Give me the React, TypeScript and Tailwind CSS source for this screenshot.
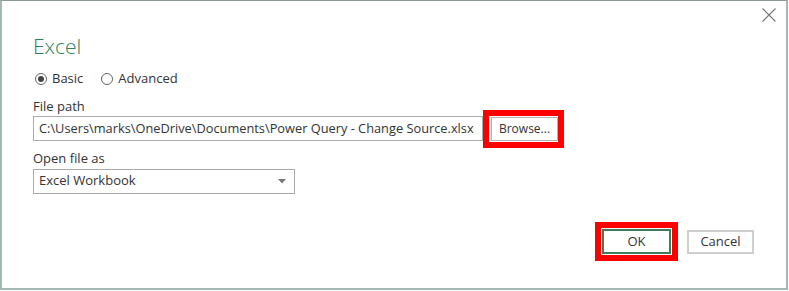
import React from "react";

const font = { fontFamily: '"Segoe UI", "Open Sans", "Liberation Sans", sans-serif' };

function Radio({ checked, label }: { checked?: boolean; label: string }) {
  return (
    <label className="flex items-center gap-[5px] text-[13px] text-[#333]">
      <span className="flex h-[12px] w-[12px] items-center justify-center rounded-full border border-[#666] bg-white">
        {checked && <span className="h-[6px] w-[6px] rounded-full bg-[#444]" />}
      </span>
      <span>{label}</span>
    </label>
  );
}

export default function App() {
  return (
    <div style={font} className="relative h-[291px] w-[789px] overflow-hidden bg-white">
      <div className="flex h-[290px] w-[788px] flex-col border-2 border-t border-[#a3b9b0] border-t-[#8a9a94] bg-white">
        <div className="flex justify-end pr-[9px] pt-[6px]">
          <svg width="16" height="16" viewBox="0 0 16 16" className="text-[#777]">
            <path d="M1.5 1.5 L14.5 14.5 M14.5 1.5 L1.5 14.5" stroke="currentColor" strokeWidth="1.1" fill="none" />
          </svg>
        </div>
        <div className="flex flex-1 flex-col pl-[31px] pr-[32px]">
          <div className="mt-[9px] text-[21px] font-light leading-[28px] text-[#2f7f5c]">Excel</div>
          <div className="mt-[9px] flex items-center gap-[18px] pl-[2px]">
            <Radio checked label="Basic" />
            <Radio label="Advanced" />
          </div>
          <div className="mt-[8px] text-[13px] leading-[18px] text-[#333]">File path</div>
          <div className="mt-[-5px] flex items-center">
            <div className="flex h-[25px] w-[450px] items-center border border-[#ababab] px-[5px] text-[12.8px] text-[#333] whitespace-nowrap overflow-hidden">
              C:\Users\marks\OneDrive\Documents\Power Query - Change Source.xlsx
            </div>
            <div className="flex items-center border-[6px] border-[#ff0000] pl-[2px] py-[1px]">
              <button className="flex h-[24px] w-[67px] items-center justify-center border border-[#b3b3b3] bg-white text-[12px] text-[#333]">
                Browse...
              </button>
            </div>
          </div>
          <div className="mt-[1px] text-[13px] leading-[18px] text-[#333]">Open file as</div>
          <div className="mt-[2px] flex h-[25px] w-[262px] items-center justify-between border border-[#ababab] pl-[5px] pr-[8px] text-[13px] text-[#333]">
            <span>Excel Workbook</span>
            <svg width="8" height="5" viewBox="0 0 8 5">
              <path d="M0 0 L8 0 L4 4.5 Z" fill="#777" />
            </svg>
          </div>
          <div className="mt-auto mb-[27px] flex items-center justify-end">
            <div className="flex items-center border-[6px] border-[#ff0000] p-[1px]">
              <button className="flex h-[25px] w-[69px] items-center justify-center border-2 border-[#3c7d5a] bg-white text-[13px] text-[#333]">
                OK
              </button>
            </div>
            <button className="ml-[9px] flex h-[24px] w-[67px] items-center justify-center border-2 border-[#cfcfcf] bg-white text-[13px] text-[#333]">
              Cancel
            </button>
          </div>
        </div>
      </div>
    </div>
  );
}
